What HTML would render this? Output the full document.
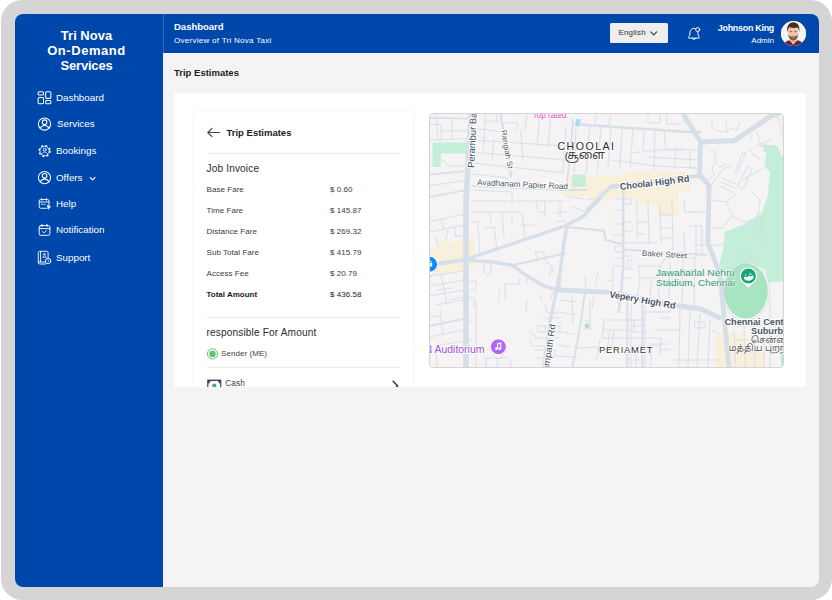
<!DOCTYPE html>
<html lang="en">
<head>
<meta charset="utf-8">
<title>Tri Nova On-Demand Services</title>
<style>
*{box-sizing:border-box;margin:0;padding:0}
html,body{width:832px;height:600px;overflow:hidden;background:#fff;font-family:"Liberation Sans",sans-serif;}
.frame{position:absolute;left:1px;top:0;width:831px;height:600px;background:#d5d5d5;border-radius:21px;}
.app{position:absolute;left:14.5px;top:14px;width:804.5px;height:573px;background:#f4f4f4;border-radius:8px;overflow:hidden;}
.side{position:absolute;left:0;top:0;width:148.5px;height:573px;background:#0047ab;color:#fff;}
.brand{position:absolute;left:0;top:14px;width:144px;text-align:center;font-weight:700;font-size:13px;line-height:15px;letter-spacing:.5px;}
.mi{position:absolute;left:41.5px;font-size:9.8px;line-height:12px;color:#fff;white-space:nowrap;letter-spacing:0}
.ic{position:absolute;left:22px;width:14px;height:14px}
.ic svg{display:block;width:14px;height:14px;fill:none;stroke:#fff;stroke-width:1.1;stroke-linecap:round;stroke-linejoin:round}
.top{position:absolute;left:148px;top:0;width:656.5px;height:38.5px;background:#0047ab;color:#fff;box-shadow:inset .7px 0 0 rgba(255,255,255,.28)}
.t1{position:absolute;left:11.5px;top:7px;font-size:9.5px;font-weight:700;line-height:12px}
.t2{position:absolute;left:11.5px;top:21.5px;font-size:8px;line-height:10px;letter-spacing:.28px}
.lang{position:absolute;left:447.5px;top:9.3px;width:58px;height:19.5px;background:#eeeeee;border-radius:1.5px;color:#333;font-size:8px;line-height:20.5px;padding-left:8.5px;letter-spacing:.15px}
.uname{position:absolute;right:45px;top:7.5px;font-size:8.9px;letter-spacing:-.25px;font-weight:700;line-height:12px;text-align:right;white-space:nowrap}
.urole{position:absolute;right:45px;top:21.5px;font-size:8px;line-height:10px;text-align:right}
.avatar{position:absolute;left:618.3px;top:6.9px;width:25.6px;height:25.6px;border-radius:50%;overflow:hidden;background:#f3f3f3}
.avatar svg{display:block;width:25.6px;height:25.6px}
.sico{position:absolute;left:0;top:0;width:148.5px;height:573px;fill:none;stroke:#fff;stroke-width:1.05;stroke-linecap:round;stroke-linejoin:round}
.tico{position:absolute;left:.5px;top:0;width:656px;height:38.5px;fill:none;stroke-linecap:round;stroke-linejoin:round}
.ptitle{position:absolute;left:159.5px;top:53px;font-size:9.5px;font-weight:700;color:#1c1c1c;line-height:12px}
.panel{position:absolute;left:159.5px;top:79px;width:631.5px;height:294px;background:#fff;border-radius:3px;overflow:hidden}
.card{position:absolute;left:19.5px;top:17.5px;width:219px;height:300px;background:#fff;border-radius:5px;box-shadow:0 0 5px rgba(0,0,0,.055)}
.map{position:absolute;left:255px;top:20px;width:355px;height:254.5px;border-radius:4px;overflow:hidden;background:#f4f2f2;border:1px solid #d4d4d4}
.cico{position:absolute;left:0;top:0;width:219px;height:300px}
.ct{position:absolute;left:33px;top:16px;font-size:9.5px;font-weight:700;color:#1c1c1c;line-height:12px}
.hr{position:absolute;left:13px;height:1px;background:#ececec;width:193.5px}
.sec{position:absolute;left:13px;font-size:10.1px;color:#2b2b2b;line-height:12px;letter-spacing:.15px}
.row{position:absolute;left:13px;font-size:8px;color:#3a3a3a;line-height:10px;width:200px;letter-spacing:.05px}
.row b{position:absolute;left:123.5px;font-weight:400}
.row.tot{font-weight:700;color:#1c1c1c;letter-spacing:0}
.row.tot b{letter-spacing:.05px}
</style>
</head>
<body>
<div class="frame"></div>
<div class="app">
  <div class="side">
    <svg class="sico" viewBox="14.5 14 148.5 573">
      <!-- dashboard -->
      <rect x="37.6" y="91.7" width="5.4" height="3.3" rx="1.1"/>
      <rect x="37.6" y="97.5" width="5.4" height="6.2" rx="1.1"/>
      <rect x="45.1" y="91.7" width="5.3" height="6.7" rx="1.1"/>
      <rect x="45.1" y="100.4" width="5.3" height="3.3" rx="1.1"/>
      <!-- services user -->
      <circle cx="44" cy="124" r="6.1"/>
      <circle cx="44.1" cy="122.2" r="2.3"/>
      <path d="M39.7 128.2c1-1.8 2.6-2.7 4.4-2.7s3.4.9 4.4 2.7"/>
      <!-- bookings gear -->
      <g stroke-width=".8">
      <circle cx="44.1" cy="151" r="4.7"/>
      <circle cx="44.1" cy="151" r="5.5" stroke-width="1.3" stroke-dasharray="2.160 2.160" stroke-linecap="butt"/>
      <circle cx="44.1" cy="149.7" r="1.5"/>
      <path d="M41.2 154.2c.6-1.4 1.6-2.1 2.9-2.1s2.3.7 2.9 2.1"/>
      </g>
      <!-- offers user -->
      <circle cx="44" cy="177.6" r="6.1"/>
      <circle cx="44.1" cy="175.8" r="2.3"/>
      <path d="M39.7 181.8c1-1.8 2.6-2.7 4.4-2.7s3.4.9 4.4 2.7"/>
      <path d="M89.6 177.4l2.5 2.5 2.5-2.5" stroke-width="1.1"/>
      <!-- help calendar -->
      <g stroke-width=".9">
      <path d="M46.5 208.3h-6.3a1.5 1.5 0 0 1-1.5-1.5v-5.8a1.5 1.5 0 0 1 1.5-1.5h6.8a1.5 1.5 0 0 1 1.5 1.5v4.3"/>
      <path d="M38.7 202h9.8M41.2 198.5v1.8M46 198.5v1.8M41 204.3h1M43.4 204.3h1"/>
      <path d="M46.8 205.2l3.5 1.7-1.6.5-.5 1.7z" fill="#fff" stroke-width=".6"/>
      </g>
      <!-- notification calendar -->
      <g stroke-width=".95">
      <rect x="38.7" y="225.6" width="10.7" height="9.7" rx="1.5"/>
      <path d="M38.7 228.6h10.7M41.6 224.3v2.3M46.5 224.3v2.3M42.3 231.6l1.3 1.3 2.3-2.3"/>
      </g>
      <!-- support book -->
      <g stroke-width=".9">
      <path d="M45.2 264h-6a1.4 1.4 0 0 1-1.4-1.4v-9.9a1.4 1.4 0 0 1 1.4-1.4h7a1.4 1.4 0 0 1 1.4 1.4v5.3"/>
      <path d="M40.1 251.3v10.7M37.8 262h6.5"/>
      <circle cx="43.9" cy="254.3" r=".9" stroke-width=".7"/>
      <path d="M42.3 257c.3-.8.9-1.2 1.6-1.2s1.3.4 1.6 1.2z" stroke-width=".7"/>
      <circle cx="47.6" cy="261" r="2.7"/>
      <path d="M47.6 259.8v1.3l.8.5" stroke-width=".7"/>
      </g>
    </svg>
    <div class="brand"><span style="letter-spacing:0">Tri Nova</span><br><span style="letter-spacing:.55px">On-Demand</span><br><span style="letter-spacing:-.2px">Services</span></div>
    <div class="mi" style="top:77.7px">Dashboard</div>
    <div class="mi" style="top:103.7px;left:42.5px">Services</div>
    <div class="mi" style="top:130.7px">Bookings</div>
    <div class="mi" style="top:157.7px">Offers</div>
    <div class="mi" style="top:183.7px">Help</div>
    <div class="mi" style="top:209.7px">Notification</div>
    <div class="mi" style="top:237.7px">Support</div>
  </div>
  <div class="top">
    <div class="t1">Dashboard</div>
    <div class="t2">Overview of Tri Nova Taxi</div>
    <div class="lang">English</div>
    <svg class="tico" viewBox="163 14 656 38.5">
      <path d="M650.7 31.9l3 3 3-3" stroke="#333" stroke-width="1.050"/>
      <g stroke="#fff" stroke-width="1">
      <path d="M695.3 28.5a3.9 3.9 0 0 0-5.3 3.6c0 2.8-.7 4.4-1.5 5.3-.2.3 0 .7.4.7h10c.4 0 .6-.4.4-.7-.6-.7-1.1-1.8-1.3-3.5-.1-.6-.1-1.2-.1-1.9"/>
      <path d="M692.3 38.3a1.7 1.7 0 0 0 3.2 0"/>
      <circle cx="697.7" cy="29.6" r="2"/>
      </g>
    </svg>
    <div class="uname">Johnson King</div>
    <div class="urole">Admin</div>
    <div class="avatar"><svg viewBox="0 0 25.6 25.6">
      <defs><filter id="bl" x="-20%" y="-20%" width="140%" height="140%"><feGaussianBlur stdDeviation=".5"/></filter></defs>
      <rect width="25.6" height="25.6" fill="#f3f3f4"/>
      <g filter="url(#bl)">
      <path d="M2.3 25.6c.3-3.6 2.4-5.4 6.2-6.3l3.7 3.9 4.2-3.9c3.7.8 5.9 2.6 6.3 6.3z" fill="#64262f"/>
      <path d="M8.8 18.5l3.4 5.4 3.7-5.4-.6-3.5H9.4z" fill="#e6b99d"/>
      <ellipse cx="12.2" cy="11.8" rx="5.2" ry="7" fill="#eec6ac"/>
      <path d="M7.1 13.6c.4 3.7 2.3 5.8 5.1 5.8s4.7-2.1 5.1-5.8c-1 1.2-2 1.9-3.2 2-.7-.6-3.1-.6-3.8 0-1.2-.1-2.2-.8-3.2-2z" fill="#76503e" opacity=".92"/>
      <path d="M10.7 16.4c1-.4 2-.4 3 0-.9.5-2.1.5-3 0z" fill="#d9a58f"/>
      <path d="M6.3 11.3C5.4 5.3 7.9 1.3 12.4 1.3c4.3 0 6.7 3.6 5.9 9.6-.4-1.9-1-3.3-1.7-4.3-2.7.7-5.8.5-8.2-.4-.9 1.2-1.6 2.9-2.1 5.1z" fill="#4e2f1f"/>
      <path d="M8.7 10.6h2.5M13.4 10.6h2.5" stroke="#5b4236" stroke-width=".7" fill="none"/>
      </g>
    </svg></div>
  </div>
  <div class="ptitle">Trip Estimates</div>
  <div class="panel">
    <div class="card">
      <svg class="cico" viewBox="194 111 219 300">
        <path d="M219.4 132.5h-11.5M212 128.3l-4.2 4.2 4.2 4.2" fill="none" stroke="#3a4560" stroke-width="1.150" stroke-linecap="round" stroke-linejoin="round"/>
        <circle cx="212.5" cy="353.9" r="5.1" fill="none" stroke="#5cc568" stroke-width="1"/>
        <circle cx="212.5" cy="353.9" r="3.2" fill="#5cc568"/>
        <rect x="207.2" y="379.6" width="14.1" height="9" fill="#3c4257"/>
        <path d="M210.8 381h6.9l2.4 3v5h-11.7v-5z" fill="#fff"/>
        <circle cx="214.3" cy="385.7" r="2.1" fill="#3fae72"/>
        <path d="M393.1 381.3l4.5 4.5-4.5 4.5" fill="none" stroke="#2b2f45" stroke-width="1.350" stroke-linecap="round" stroke-linejoin="round"/>
      </svg>
      <div class="ct">Trip Estimates</div>
      <div class="hr" style="top:42.5px"></div>
      <div class="sec" style="top:52px">Job Invoice</div>
      <div class="row" style="top:74px">Base Fare<b>$ 0.60</b></div>
      <div class="row" style="top:95px">Time Fare<b>$ 145.87</b></div>
      <div class="row" style="top:116px">Distance Fare<b>$ 269.32</b></div>
      <div class="row" style="top:137px">Sub Total Fare<b>$ 415.79</b></div>
      <div class="row" style="top:158px">Access Fee<b>$ 20.79</b></div>
      <div class="row tot" style="top:179.3px">Total Amount<b>$ 436.58</b></div>
      <div class="hr" style="top:206.7px"></div>
      <div class="sec" style="top:216.3px">responsible For Amount</div>
      <div class="row" style="top:238.3px;left:27.6px;font-size:8px;color:#3a3f4d">Sender (ME)</div>
      <div class="hr" style="top:256.8px"></div>
      <div class="row" style="top:267.3px;left:31.8px;font-size:8.3px;color:#3a3f4d">Cash</div>
    </div>
    <div class="map"><!--MAP--><svg viewBox="429 113 355 254.5" width="355" height="254.5" style="display:block;position:absolute;left:-1px;top:-1px" font-family="'Liberation Sans',sans-serif">
<rect x="429" y="113" width="355" height="255" fill="#f5f3f3"/>
<!-- beige commercial areas -->
<g fill="#f9f0dc">
<path d="M562.6 188h4.7v-12.5H627v-3.5h63v20h-12v23.5h-20.4v-10H639v-7.5h-29v1.5h-20V196h-27.4z"/>
<path d="M429 248.5h9.5v-6.7h20v-3.4h16.2v30.3h-6v3.3h-20v2h-10v-1.5h-9.7z"/>
<path d="M715.7 333H744v17h20.5v17h-48.8z"/>
</g>
<!-- green -->
<g fill="#c3eed7">
<path d="M432.5 142.5h34.5v11h-26.2v13.5h-8.3z"/>
<path d="M572 174.5h13.5v12.3h-13.5z"/>
<path d="M762.4 144.2l15.6 1.8 2.5 8 3.5 3V282h-16l-2-12-16-7-15 3-9 8-7-8 4.2-17.5 1.8-16.8 16-5.9 20-11 6-16.8.8-2.5 2.2-23.5-5.5-7 2-13h-2.5z"/>
<path d="M780.5 354l3.5-1v14h-2.5z" fill="#b5e8c9"/>
</g>
<rect x="584.8" y="323.8" width="4.5" height="4.5" fill="#a9e3bd"/>
<path d="M576.5 118.8l4.3.8-1.5 7-4.3-.8z" fill="#9fdcf5"/>
<!-- stadium -->
<ellipse cx="745.8" cy="291" rx="22" ry="27.5" fill="#a7e5c2"/>
<ellipse cx="745.8" cy="291" rx="24" ry="29.5" fill="none" stroke="#d3dbe6" stroke-width=".8"/>
<!-- minor streets -->
<g fill="none" stroke="#d5deea" stroke-width=".95" stroke-linecap="round" stroke-linejoin="round">
<path d="M429 118l41 1M429 124l12 1v16M441 131h28M429 140l40-1.5M429 160h14l5 6h14l6-3M429 175l38-4M429 186l38-6M429 197l38-7M436 113l2 27M452 119v20M485 113v8h14M485 121l-1 22M497 113l-1 10M472 128l30 4M472 140l92 6M472 152l92 8M472 163l92 10M472 174l36 4M483 150l2-14M492 161l2-22M521 130l2 30M505 123h12v8M527 113l-2 17M540 113l-3 33M551 113l-3 34M566 127l-3 45M576 128l-2 44M590 125l-4 48M601 126l-4 48M611 127l-3 40M622 128l-2 40M633 128l-3 40M644 129l-1 22h12M655 130l-1 40M664 131l2 18h18M640 152l-8 1M612 160l44 6M656 166l40 2M676 150l-2 18M690 152v16M648 113v10h12v-10M666 113l1 11h14M694 120l-12 1M611 113l-2 12M596 113l-1 11"/>
<path d="M472 190l40 2v12M472 201h92M472 212h30l2 25M502 212h20l3 28M522 225h12M490 213l1 10M512 214v8M545 202l-1 16M560 203v14M536 202l2 10h8M478 225l2 28M486 228l8-1 3 22M472 222h8"/>
<path d="M429 222l36-8M429 232l36-7M441 219l3 10M448 230l-2 10M455 228l1 9M462 236h-8M436 238l2 8"/>
<path d="M429 276l36-5M429 286l36-6M429 296l36-6M441 274l6 30M450 300l14-3M438 290l14-2M436 305l28-5M429 317l10-1M440 310l3 24M429 337l36-7M440 345l24-4M436 350l1 17M484 264v9c2 3 5 3 7 0v-9M470 281h6v9h-6M505 300v-16h14v-6M527 283v-6M552 265l-3 10M535 252l3 10M535 252h8l4 12M548 262l6 8-5 4"/>
<path d="M566 196l18 3M572 207l12 4 3 8M556 213l10-1M556 222l9-1M600 190v8M587 199l7 1M623 199h-8M623 210h-8M623 224h-8M623 235h-10M623 246h-8v6h8M623 258h-8M623 266h-10v30M613 280l-6 1M598 272l-3 14M585 278l1 10M623 199h8v5h-8M623 222h8M623 231h10M623 243h34M623 256h8M623 269h10M623 278h8M637 200v38M648 200l1 44M637 222h10M637 234h8M660 205l1 38M672 200l1 50M660 215h12M660 228h10M660 238h12M684 200l1 12h10M628 262c1-3 3-3 4 0s-2 7-4 5z"/>
<path d="M639 266v12h18l3-12M639 266h22l4-8h30M652 278l-2 18M640 280l-3 16M660 278l-2 20M670 262l-1 36M683 258l-1 46M695 256l-1 50M683 270h12M684 232l1 22M690 226h12v30M696 226v30M702 240h6M695 245h12M697 255h10M690 212h16"/>
<path d="M712 200l14 2 10-8M726 202l6 14 14 6 12-6 2-16-8-8M732 216l-8 10M746 222v6M712 228h12M712 246l12-2M714 262l4 2M738 226l16 2 2 10M725 246h6l2 6 12 3 12-3M757 214l4 6 1 30-4 8-10 1M761 214h-4M757 240l-1-20M741 256l6 6"/>
<path d="M700 150h-46M700 160l-52-3M700 168h-8M710 150l6 3-2 8 6 6 6-3M716 162l-4 6 2 8-6 4M735 172l8-20 3 1-9 20zM722 178l14 6M721 182l14 6M720 186l12 6M738 185l8-16c2-3 6-2 5 2l-7 16c-2 2-6 1-6-2zM708 190l14-20 8-4M742 180l12-6 12-8M750 150l4 6 6 3M752 140l-2-6M712 120c-2 8 4 12 12 12l10-4M726 122l1 10M740 122l-4 8M757 132l4 14h14M772 140l-14 5"/>
<path d="M468 298h6v10M472 320l-8 1M500 290l-2 12M527 300l-1 12M540 295l2 6M553 292l-3 8M545 305l2 8h10M543 318h18M538 326h22v6h-22zM545 326v6M552 326v6M534 338h24M530 338l2 8h12M536 350h20l-2 8h-18M530 330c0 4 3 6 6 6M497 358v9M484 358h24M486 359v8M510 359l2 8M472 340l-8 1M472 352h-6"/>
<path d="M560 300l16 2M558 312l18 3M562 322l-4 1M572 296l1 28M584 320l4 1v8h-4M594 296l-2 12M560 332l14 2M558 345l12 2M556 356l20 1M575 348l24-1M590 300v30M604 320h30v10h-30zM604 320l-2 18h30M600 340l-4 20M610 330l-3 20M614 330l-2 18M631 300v67M645 300v67M631 320h14M631 326h14M631 332h14M631 338h30v8h-30M645 312h16M631 352h20M651 346v21M661 338l-1 18M628 360h17M636 352v15M618 300l2 8M660 296v6"/>
<path d="M670 300l-1 12h-14M680 308l-1 59M690 310l-2 57M700 314l-3 53M710 320l-2 47M695 322h10v6h-10zM660 318h10M655 330h24M650 344h18M670 350h-10M672 360h46M712 330l6 4M734 330l2 37M744 320l1 47M754 330l1 37M764 318v49M734 340h30M734 352h20M770 300v67M774 320l6 30M738 326h28"/>
<path d="M476 300v67M480 350h-8"/>
</g>
<!-- railway hatch top right -->
<g stroke="#d9d9dc" stroke-width=".7" fill="none"><path d="M773 114l9 6M775 117l8 7M777 121l6 7M778.5 125l5 6M780 129l4 5M781 133l3 4M782 137l2 3M771 113l6 3"/></g>
<!-- medium roads -->
<g fill="none" stroke="#d7dfe9" stroke-linecap="round" stroke-linejoin="round">
<path d="M500.5 113l3.5 22 4 22 3 19" stroke-width="2.2"/>
<path d="M573 120l-2.5 30-3.5 33" stroke-width="1.8"/>
<path d="M429 174.5l37-3.5" stroke-width="1.7"/>
<path d="M466 259.5l50-17 49-16.5 18-9.5 17.5-18" stroke-width="3.4"/>
<path d="M566.8 226.6l-3.5 20-3.8 30-1 14" stroke-width="3.3"/>
<path d="M558.8 278l-10 50-5.3 39" stroke-width="3"/>
<path d="M429 265.3l37-5.8" stroke-width="4"/>
<path d="M466 260l26 2 20.5 3.3 13.5 10 17 10 13.5 4.5h12" stroke-width="3.4"/>
<path d="M512.5 265.3l52.5-12" stroke-width="2"/>
<path d="M566.8 227l37 3.8 1.7 9.2 17.5 4.3" stroke-width="2"/>
<path d="M623.2 187l0 80-2.6 31-2 14" stroke-width="2.4"/>
<path d="M623 249.5l81 5.1" stroke-width="1.8"/>
<path d="M627.4 300v67M642.5 300v67" stroke-width="2"/>
<path d="M585 292l-5 35-7.5 40" stroke-width="1.8"/>
<path d="M429 326l37-7.6" stroke-width="1.8"/>
<path d="M580 124.5l108 7.5h12" stroke-width="2.6"/>
<path d="M429 118l41 .5" stroke-width="1.6"/>
<path d="M429 197l38-7" stroke-width="1.6"/>
<path d="M472 186l92 4h22" stroke-width="1.8"/>
</g>
<!-- major roads -->
<g fill="none" stroke="#d6dee8" stroke-linecap="butt" stroke-linejoin="round">
<path d="M471.2 113l-5.2 87v167.5" stroke-width="5.6"/>
<path d="M682.8 113l17.7 28.7-.8 33.6 9.3 10.1-.4 23 -.6 35 8.5 21.8 4 14 8.5 89" stroke-width="4.8"/>
<path d="M700.5 141.7l33.5-.9 39-26.1 11-3" stroke-width="5"/>
<path d="M610.5 187l79.5-10 10-1.7" stroke-width="4.3"/>
<path d="M587 210l23.5-23" stroke-width="3.6" stroke-linecap="round"/>
<path d="M555 289.8l54 2.5 67 13.2 24.5 3.5 20.5 9.5" stroke-width="5"/>
</g>
<!-- labels -->
<g stroke="#fff" stroke-width="2.2" stroke-linejoin="round" paint-order="stroke fill" style="paint-order:stroke fill">
<text x="532.5" y="118" font-size="8.2" fill="#ee3fc6" stroke-width="1.5">Top rated</text>
<text transform="translate(474.2 168) rotate(-87.5)" font-size="9.4" fill="#3f4a58">Perambur Barracks</text>
<text transform="translate(501 130.5) rotate(80)" font-size="7.8" fill="#4b5663" textLength="39" lengthAdjust="spacingAndGlyphs">Rangiah St</text>
<text transform="translate(477 185) rotate(2.7)" font-size="8.3" fill="#4b5663" textLength="91" lengthAdjust="spacingAndGlyphs">Avadhanam Papier Road</text>
<text x="557.5" y="149.7" font-size="10.6" fill="#2b2b2b" textLength="56.5" lengthAdjust="spacing" stroke-width="1.6">CHOOLAI</text>
<text x="564.5" y="159" font-size="12" fill="#3c3c3c" textLength="40.5" lengthAdjust="spacingAndGlyphs" stroke-width="1.6" font-family="'Liberation Sans','Noto Sans Tamil',sans-serif">சூளை</text>
<text transform="translate(620.3 190) rotate(-7)" font-size="9.4" font-weight="700" fill="#4a5664" textLength="70" lengthAdjust="spacingAndGlyphs">Choolai High Rd</text>
<text transform="translate(641.7 255.8) rotate(3.2)" font-size="8" fill="#4b5663" textLength="45.5" lengthAdjust="spacingAndGlyphs">Baker Street</text>
<text x="656" y="276.4" font-size="9.5" fill="#2f9d70" textLength="79" lengthAdjust="spacingAndGlyphs" stroke="#f5f3f3" stroke-width="1.2">Jawaharlal Nehru</text>
<text x="656" y="285.9" font-size="9.5" fill="#2f9d70" textLength="79" lengthAdjust="spacingAndGlyphs" stroke="#f5f3f3" stroke-width="1.2">Stadium, Chennai</text>
<text transform="translate(609 297.2) rotate(10.2)" font-size="9.4" font-weight="700" fill="#4a5664" textLength="67" lengthAdjust="spacingAndGlyphs">Vepery High Rd</text>
<text x="599" y="353.4" font-size="9.4" fill="#2e2e2e" textLength="53.5" lengthAdjust="spacing" stroke-width="1.6">PERIAMET</text>
<text x="724.4" y="325.4" font-size="9.2" font-weight="700" fill="#4a5665" stroke-width="1.8">Chennai Central</text>
<text x="751" y="334.2" font-size="9.2" font-weight="700" fill="#4a5665" stroke-width="1.8">Suburban</text>
<text x="751" y="343" font-size="9" fill="#555" stroke-width="1.2" font-family="'Liberation Sans','Noto Sans Tamil',sans-serif">சென்னை</text>
<text x="728.8" y="351.3" font-size="9" fill="#555" stroke-width="1.2" font-family="'Liberation Sans','Noto Sans Tamil',sans-serif">மத்திய புறநகர்</text>
<text x="424.5" y="353" font-size="10" fill="#9b51e0" textLength="60" lengthAdjust="spacingAndGlyphs" stroke-width="1.8">N Auditorium</text>
<text transform="translate(547.6 378) rotate(-81.5)" font-size="9" fill="#46525f" textLength="54" lengthAdjust="spacingAndGlyphs">Sampath Rd</text>
</g>
<!-- markers -->
<defs><filter id="ps" x="-30%" y="-30%" width="160%" height="170%"><feDropShadow dx="0" dy=".6" stdDeviation=".6" flood-color="#000" flood-opacity=".28"/></filter></defs>
<g filter="url(#ps)" fill="#fff">
<path d="M429.6 255.7a8.6 8.6 0 0 1 6.3 14.5l-5.2 5a1.5 1.5 0 0 1-2.2 0l-5.2-5a8.6 8.6 0 0 1 6.3-14.5z"/>
<path d="M498.4 338.1a8.6 8.6 0 0 1 6.3 14.5l-5.2 5a1.5 1.5 0 0 1-2.2 0l-5.2-5a8.6 8.6 0 0 1 6.3-14.5z"/>
<path d="M748.4 267.4a8.6 8.6 0 0 1 6.3 14.5l-5.2 5a1.5 1.5 0 0 1-2.2 0l-5.2-5a8.6 8.6 0 0 1 6.3-14.5z"/>
</g>
<circle cx="429.6" cy="264.3" r="7.5" fill="#0b8bff"/>
<path d="M429 262.8h3.2v3.8H429z" fill="#fff"/><path d="M429 261.2c1.3-.9 2.5-.2 2.6 1.4" fill="none" stroke="#fff" stroke-width=".8"/>
<circle cx="498.4" cy="346.7" r="7.5" fill="#b266ff"/>
<path d="M497.1 343.3l4.2-1.1v6.4a1.5 1.3 0 1 1-1.1-1.2v-3.5l-2.1.6v4.1a1.5 1.3 0 1 1-1.1-1.2z" fill="#fff"/>
<circle cx="748.4" cy="276" r="7.5" fill="#16a672"/>
<path d="M744 277l1.3-.6 1.2 1 2.5-1.7 1.5.8 2.8-1.3v3.6l-4.3 2.1-1.3-.7-1.5.8-.1-1.8-1 .5-1.1-.6z" fill="#fff"/>
<path d="M745.3 274.2l.5 1.6M749.8 272.8l.4 2 1.6-.6" fill="none" stroke="#fff" stroke-width=".8"/>
</svg>
<!--/MAP--></div>
  </div>
</div>
</body>
</html>
